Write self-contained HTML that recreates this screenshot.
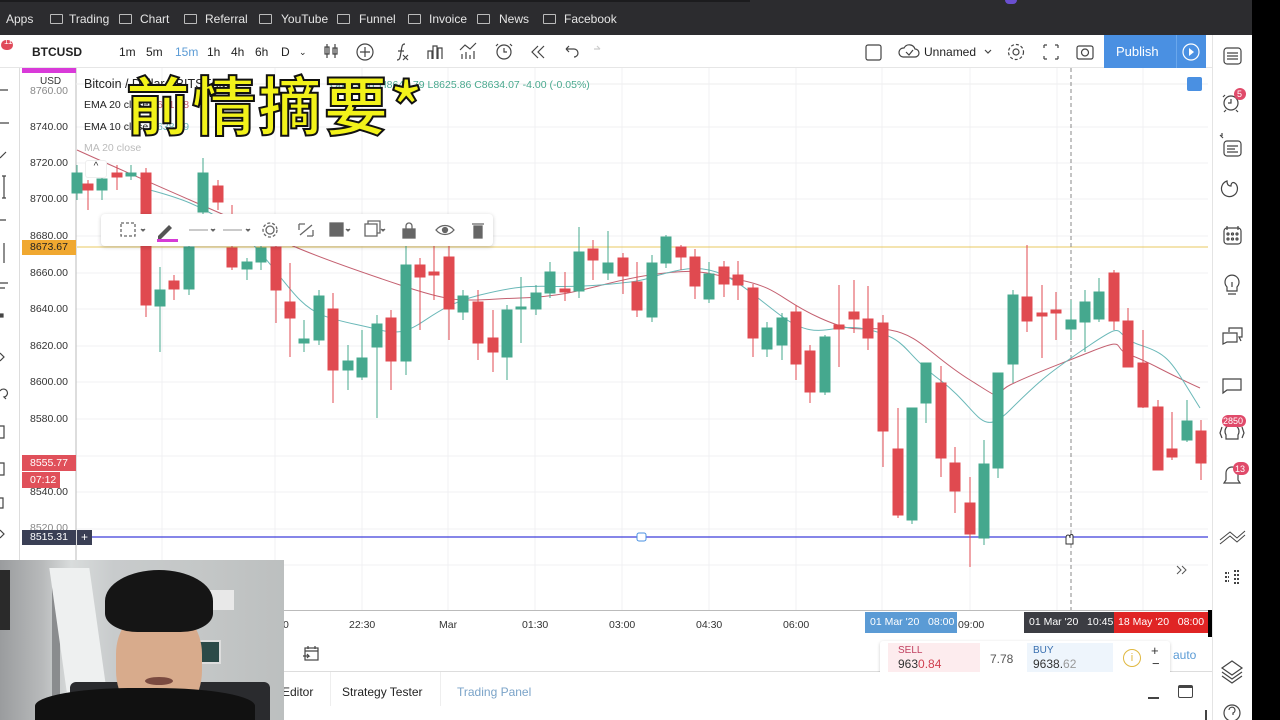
<!DOCTYPE html>
<html><head><meta charset="utf-8">
<style>
*{margin:0;padding:0;box-sizing:border-box}
body{width:1280px;height:720px;overflow:hidden;background:#000;font-family:"Liberation Sans",sans-serif;position:relative}
.abs{position:absolute;white-space:nowrap}
#bm{left:0;top:0;width:1252px;height:35px;background:#2c2c2f;color:#e6e6e6;font-size:12px}
#bm span{position:absolute;top:12px}
.fold{display:inline-block;width:13px;height:10px;border:1.3px solid #bbb;border-radius:1px;position:absolute;top:14px}
#hdr{left:0;top:35px;width:1212px;height:33px;background:#fff;border-bottom:1px solid #e6e6e6;font-size:12px;color:#222}
#hdr span{position:absolute;top:10px}
#ltb{left:0;top:68px;width:20px;height:652px;background:#fff;border-right:1px solid #ddd}
#rtb{left:1212px;top:35px;width:40px;height:685px;background:#fff;border-left:1px solid #e4e4e4}
.pl{position:absolute;left:30px;font-size:10.5px;color:#333}
.tl{position:absolute;top:619px;font-size:10.5px;color:#333}
</style></head><body>
<div id="bm" class="abs">
<span style="left:6px">Apps</span>
<i class="fold" style="left:50px"></i><span style="left:69px">Trading</span>
<i class="fold" style="left:119px"></i><span style="left:140px">Chart</span>
<i class="fold" style="left:184px"></i><span style="left:205px">Referral</span>
<i class="fold" style="left:259px"></i><span style="left:281px">YouTube</span>
<i class="fold" style="left:337px"></i><span style="left:359px">Funnel</span>
<i class="fold" style="left:408px"></i><span style="left:429px">Invoice</span>
<i class="fold" style="left:477px"></i><span style="left:499px">News</span>
<i class="fold" style="left:543px"></i><span style="left:564px">Facebook</span>
</div>
<div class="abs" style="left:0;top:0;width:750px;height:2px;background:#1c1c1e"></div>
<div class="abs" style="left:1005px;top:0;width:12px;height:4px;border-radius:0 0 6px 6px;background:#6a4fd0"></div>

<div id="hdr" class="abs">
<span style="left:32px;font-weight:bold">BTCUSD</span>
<span style="left:119px">1m</span><span style="left:146px">5m</span><span style="left:175px;color:#5b9bd5">15m</span>
<span style="left:207px">1h</span><span style="left:231px">4h</span><span style="left:255px">6h</span><span style="left:281px">D</span>
<span style="left:299px;font-size:9px;top:12px">&#8964;</span>
<span style="left:924px">Unnamed</span>
<div class="abs" style="left:1104px;top:0;width:72px;height:33px;background:#4a90e2;color:#fff;font-size:13px;padding:9px 0 0 12px">Publish</div>
<div class="abs" style="left:1176px;top:0;width:30px;height:33px;background:#4a90e2;border-left:1px solid #6aa7ec"></div>
<svg class="abs" style="left:0;top:0" width="1212" height="33" fill="none" stroke="#444" stroke-width="1.2">
<rect x="1" y="5" width="12" height="10" rx="5" fill="#e04a5a" stroke="none"/>
<path d="M327 9v14M335 9v14" /><rect x="325" y="12" width="4" height="7"/><rect x="333" y="13" width="4" height="6"/>
<circle cx="365" cy="17" r="8"/><path d="M365 12v10M360 17h10"/>
<path d="M397 25c3 0 3-2 4-8s1-8 4-8M398 16h6M403 20l5 5M408 20l-5 5"/>
<path d="M428 24V16h4v8M433 24V11h4v13M438 24V13h4v11"/>
<path d="M462 24v-5M466 24v-7M470 24v-4M474 24v-8M460 15l5-5 5 4 6-6"/>
<circle cx="504" cy="17" r="7"/><path d="M504 13v4h3M498 9l-2 2M510 9l2 2"/>
<path d="M538 11l-6 6 6 6M544 11l-6 6 6 6"/>
<path d="M566 14h8a4 4 0 0 1 0 8M566 14l3-3M566 14l3 3"/>
<path d="M600 14h-6M600 14l-3-3" stroke="#ccc"/>
<rect x="866" y="10" width="15" height="15" rx="2"/>
<path d="M903 22h12a4 4 0 0 0 0-8 6 6 0 0 0-11-1 4 4 0 0 0-1 9zM906 17l3 3 4-5"/>
<path d="M985 15l3 3 3-3" />
<circle cx="1016" cy="17" r="3"/><circle cx="1016" cy="17" r="7.5" stroke-dasharray="3 2"/>
<path d="M1044 10h3M1044 10v3M1058 10h-3M1058 10v3M1044 24h3M1044 24v-3M1058 24h-3M1058 24v-3"/>
<rect x="1077" y="11" width="16" height="13" rx="2"/><circle cx="1085" cy="17.5" r="3.5"/>
<circle cx="1191" cy="17" r="8" stroke="#fff"/><path d="M1189 13l5 4-5 4z" fill="#fff" stroke="none"/>
</svg>
</div>
<div class="abs" style="top:37px;font-size:8px;color:#fff;left:4px">11</div>

<!-- chart -->
<svg class="abs" style="left:20px;top:68px" width="1192" height="542">
<rect width="1192" height="542" fill="#fff"/>
<g stroke="#f0f1f3" stroke-width="1">
<path d="M56 59H1188M56 95H1188M56 131H1188M56 168H1188M56 205H1188M56 241H1188M56 278H1188M56 314H1188M56 351H1188M56 388H1188M56 424H1188M56 461H1188M56 497H1188"/>
<path d="M142 0V542M255 0V542M342 0V542M428 0V542M515 0V542M602 0V542M689 0V542M776 0V542M862 0V542M950 0V542M1037 0V542M1123 0V542"/>
</g>
<path d="M56 0V542" stroke="#bbb"/>
<path d="M56 16H1188" stroke="#eee"/>
</svg>
<div class="abs" style="left:22px;top:68px;width:54px;height:5px;background:#d93ad9"></div>
<div class="pl" style="top:76px;left:40px;font-size:10px">USD</div>
<div class="pl" style="top:85px;color:#888">8760.00</div>
<div class="pl" style="top:121px">8740.00</div>
<div class="pl" style="top:157px">8720.00</div>
<div class="pl" style="top:193px">8700.00</div>
<div class="pl" style="top:230px">8680.00</div>
<div class="pl" style="top:267px">8660.00</div>
<div class="pl" style="top:303px">8640.00</div>
<div class="pl" style="top:340px">8620.00</div>
<div class="pl" style="top:376px">8600.00</div>
<div class="pl" style="top:413px">8580.00</div>
<div class="pl" style="top:486px">8540.00</div>
<div class="pl" style="top:522px;color:#888">8520.00</div>
<div class="abs" style="left:22px;top:240px;width:54px;height:15px;background:#f0a830;color:#222;font-size:10.5px;padding:1px 0 0 8px">8673.67</div>
<div class="abs" style="left:22px;top:455px;width:54px;height:16px;background:#e0505a;color:#fff;font-size:10.5px;padding:2px 0 0 8px">8555.77</div>
<div class="abs" style="left:22px;top:472px;width:38px;height:16px;background:#e0505a;color:#fff;font-size:10.5px;padding:2px 0 0 8px">07:12</div>
<div class="abs" style="left:22px;top:530px;width:54px;height:15px;background:#3a3f55;color:#fff;font-size:10.5px;padding:1px 0 0 8px">8515.31</div>
<div class="abs" style="left:77px;top:530px;width:15px;height:15px;background:#3a3f55;color:#fff;font-size:12px;text-align:center;line-height:14px">+</div>

<svg class="abs" style="left:0;top:0" width="1212" height="640">
<g stroke-width="1">
<path d="M77 247H1208" stroke="#e8c860"/>
<path d="M92 537H1208" stroke="#3d3ddb" stroke-width="1.3"/>
<path d="M1071 68V610" stroke="#888" stroke-dasharray="4 3"/>
<rect x="637" y="533" width="9" height="8" rx="2" fill="#fff" stroke="#4a90e2"/>
<path d="M77 150C110 165 140 178 190 200S260 230 280 240 340 265 400 285 460 300 520 298 600 282 650 275 700 272 740 280 780 300 820 318 860 325 890 330 930 355 970 380 990 395 1010 385 1050 368 1090 352 1110 348 1130 355 1160 370 1200 388" fill="none" stroke="#c46070"/>
<path d="M150 190C180 198 200 205 230 225S280 280 300 300 340 320 380 330 420 310 480 295 540 290 600 285 640 278 680 270 740 285 780 315 830 320 870 330 900 350 940 380 980 440 1010 410 1050 372 1090 345 1110 335 1140 345 1170 360 1200 408" fill="none" stroke="#6ab8b8"/>
</g>
<g stroke="#e04a50" fill="#e04a50" stroke-width="1">
<path d="M88 180V210M117 165V190M146 168V317M174 275V300M218 180V210M232 205V270M276 240V323M290 263V357M333 293V403M391 310V390M420 258V330M434 240V300M449 240V340M478 290V360M493 310V372M565 272V301M593 240V280M623 253V294M637 262V317M681 245V270M695 249V299M724 261V297M738 261V300M753 284V357M796 305V380M810 345V403M839 285V367M854 280V333M868 286V350M883 315V467M898 408V518M941 366V477M955 447V513M970 477V567M1027 245V332M1042 285V358M1056 292V340M1114 270V330M1128 308V367M1143 330V408M1158 400V470M1172 412V460M1201 420V480"/>
<rect x="83" y="184" width="10" height="6"/><rect x="112" y="173" width="10" height="4"/><rect x="141" y="173" width="10" height="132"/>
<rect x="169" y="281" width="10" height="8"/><rect x="213" y="186" width="10" height="16"/><rect x="227" y="248" width="10" height="19"/>
<rect x="271" y="247" width="10" height="43"/><rect x="285" y="302" width="10" height="16"/><rect x="328" y="309" width="10" height="61"/>
<rect x="386" y="318" width="10" height="43"/><rect x="415" y="265" width="10" height="12"/><rect x="429" y="272" width="10" height="3"/>
<rect x="444" y="257" width="10" height="52"/><rect x="473" y="302" width="10" height="41"/><rect x="488" y="338" width="10" height="14"/>
<rect x="560" y="289" width="10" height="3"/><rect x="588" y="249" width="10" height="11"/><rect x="618" y="258" width="10" height="18"/>
<rect x="632" y="282" width="10" height="28"/><rect x="676" y="247" width="10" height="10"/><rect x="690" y="257" width="10" height="29"/>
<rect x="719" y="267" width="10" height="17"/><rect x="733" y="275" width="10" height="10"/><rect x="748" y="288" width="10" height="50"/>
<rect x="791" y="312" width="10" height="52"/><rect x="805" y="351" width="10" height="41"/><rect x="834" y="325" width="10" height="4"/>
<rect x="849" y="312" width="10" height="7"/><rect x="863" y="319" width="10" height="19"/><rect x="878" y="323" width="10" height="108"/>
<rect x="893" y="449" width="10" height="66"/><rect x="936" y="383" width="10" height="75"/><rect x="950" y="463" width="10" height="28"/>
<rect x="965" y="503" width="10" height="31"/><rect x="1022" y="297" width="10" height="24"/><rect x="1037" y="313" width="10" height="3"/>
<rect x="1051" y="310" width="10" height="3"/><rect x="1109" y="273" width="10" height="48"/><rect x="1123" y="321" width="10" height="46"/>
<rect x="1138" y="363" width="10" height="44"/><rect x="1153" y="407" width="10" height="63"/><rect x="1167" y="449" width="10" height="8"/>
<rect x="1196" y="431" width="10" height="32"/>
</g>
<g stroke="#45a88e" fill="#45a88e" stroke-width="1">
<path d="M77 165V200M102 175V200M131 165V180M160 267V352M189 240V295M203 158V215M247 258V280M261 240V270M304 320V352M319 290V345M348 345V390M362 330V380M377 315V418M406 245V375M463 290V320M507 305V380M521 277V343M536 285V315M550 262V298M579 227V298M608 231V280M652 255V322M666 235V268M709 262V303M767 322V357M782 313V360M825 335V395M912 408V524M926 363V423M984 440V545M998 373V478M1013 290V383M1071 300V340M1085 290V352M1099 278V322M1187 400V442"/>
<rect x="72" y="173" width="10" height="20"/><rect x="97" y="179" width="10" height="11"/><rect x="126" y="173" width="10" height="3"/>
<rect x="155" y="290" width="10" height="16"/><rect x="184" y="247" width="10" height="42"/><rect x="198" y="173" width="10" height="39"/>
<rect x="242" y="262" width="10" height="7"/><rect x="256" y="248" width="10" height="14"/><rect x="299" y="339" width="10" height="4"/>
<rect x="314" y="296" width="10" height="44"/><rect x="343" y="361" width="10" height="9"/><rect x="357" y="358" width="10" height="19"/>
<rect x="372" y="324" width="10" height="23"/><rect x="401" y="265" width="10" height="96"/><rect x="458" y="296" width="10" height="16"/>
<rect x="502" y="310" width="10" height="47"/><rect x="516" y="307" width="10" height="2"/><rect x="531" y="293" width="10" height="16"/>
<rect x="545" y="272" width="10" height="21"/><rect x="574" y="252" width="10" height="39"/><rect x="603" y="263" width="10" height="10"/>
<rect x="647" y="263" width="10" height="54"/><rect x="661" y="237" width="10" height="26"/><rect x="704" y="274" width="10" height="25"/>
<rect x="762" y="328" width="10" height="21"/><rect x="777" y="318" width="10" height="27"/><rect x="820" y="337" width="10" height="55"/>
<rect x="907" y="408" width="10" height="112"/><rect x="921" y="363" width="10" height="40"/><rect x="979" y="464" width="10" height="74"/>
<rect x="993" y="373" width="10" height="95"/><rect x="1008" y="295" width="10" height="69"/><rect x="1066" y="320" width="10" height="9"/>
<rect x="1080" y="302" width="10" height="20"/><rect x="1094" y="292" width="10" height="27"/><rect x="1182" y="421" width="10" height="19"/>
</g>
<path d="M1066 538c0-4 4-4 4 0v-2c0-2 3-2 3 0v8h-7z" fill="#fff" stroke="#333"/>
<path d="M1177 566l4 4-4 4M1182 566l4 4-4 4" stroke="#555" fill="none"/>
<rect x="1187" y="77" width="15" height="14" rx="2" fill="#4a90e2"/>
</svg>

<div class="abs" style="left:84px;top:77px;font-size:12.5px;color:#222">Bitcoin / Dollar · BITSTAMP</div>
<div class="abs" style="left:330px;top:79px;font-size:10.5px;color:#4aa98f">O8629.31 H8649.79 L8625.86 C8634.07 -4.00 (-0.05%)</div>
<div class="abs" style="left:84px;top:99px;font-size:10.5px;color:#222">EMA 20 close <span style="color:#c46070">8641.98</span></div>
<div class="abs" style="left:84px;top:121px;font-size:10.5px;color:#222">EMA 10 close <span style="color:#6ab8b8">8638.89</span></div>
<div class="abs" style="left:84px;top:142px;font-size:10.5px;color:#bbb">MA 20 close</div>
<div class="abs" style="left:85px;top:160px;width:22px;height:18px;background:#fff;border:1px solid #eee;border-radius:3px;font-size:10px;text-align:center;color:#333">^</div>
<div class="abs" style="left:126px;top:61px;font-family:'Noto Sans CJK SC',sans-serif;font-size:64px;font-weight:bold;color:#f2f21a;-webkit-text-stroke:2px #111;line-height:84px;letter-spacing:2px">前情摘要*</div>

<div class="abs" style="left:101px;top:214px;width:392px;height:32px;background:#fff;border-radius:4px;box-shadow:0 1px 4px rgba(0,0,0,.2)"></div>
<svg class="abs" style="left:101px;top:214px" width="392" height="32" fill="none" stroke="#666" stroke-width="1.3">
<rect x="20" y="9" width="14" height="13" stroke-dasharray="3 2"/>
<path d="M40 15l2 2 2-2M110 15l2 2 2-2M145 15l2 2 2-2M245 15l2 2 2-2M280 15l2 2 2-2" fill="#666"/>
<path d="M57 22l11-11 3 3-11 11h-3z" fill="#555" stroke="none"/>
<rect x="56" y="25" width="21" height="3" fill="#d63bd6" stroke="none"/>
<path d="M88 16h19M122 16h19" stroke="#aaa"/>
<circle cx="169" cy="16" r="4"/><circle cx="169" cy="16" r="7" stroke-dasharray="3 2"/>
<path d="M198 10h6M198 10v6M212 22h-6M212 22v-6M199 21l12-10"/>
<rect x="229" y="9" width="13" height="13" fill="#666"/>
<rect x="264" y="10" width="12" height="12"/><path d="M267 10V7h12v12h-3"/>
<rect x="302" y="15" width="12" height="9" fill="#666"/><path d="M305 15v-3a3 3 0 0 1 6 0v3"/>
<path d="M335 16c5-6 13-6 18 0-5 6-13 6-18 0z"/><circle cx="344" cy="16" r="2.5" fill="#666"/>
<path d="M371 10h12M373 12h8v12h-8z" fill="#666"/>
</svg>

<div class="abs" style="left:76px;top:610px;width:1132px;height:27px;background:#fff;border-top:1px solid #bbb"></div>
<div class="tl" style="left:283px">0</div>
<div class="tl" style="left:349px">22:30</div>
<div class="tl" style="left:439px">Mar</div>
<div class="tl" style="left:522px">01:30</div>
<div class="tl" style="left:609px">03:00</div>
<div class="tl" style="left:696px">04:30</div>
<div class="tl" style="left:783px">06:00</div>
<div class="abs" style="left:865px;top:612px;width:92px;height:21px;background:#5b9bd5;color:#fff;font-size:10.5px;padding:4px 0 0 5px">01 Mar '20&nbsp;&nbsp;&nbsp;08:00</div>
<div class="tl" style="left:958px">09:00</div>
<div class="abs" style="left:1024px;top:612px;width:90px;height:21px;background:#3c3d43;color:#fff;font-size:10.5px;padding:4px 0 0 5px">01 Mar '20&nbsp;&nbsp;&nbsp;10:45</div>
<div class="abs" style="left:1114px;top:612px;width:94px;height:21px;background:#e02424;color:#fff;font-size:10.5px;padding:4px 0 0 4px">18 May '20&nbsp;&nbsp;&nbsp;08:00</div>

<div class="abs" style="left:20px;top:637px;width:1192px;height:35px;background:#fff;border-bottom:1px solid #ddd"></div>
<svg class="abs" style="left:300px;top:645px" width="24" height="20" fill="none" stroke="#444" stroke-width="1.2"><rect x="5" y="3" width="13" height="12"/><path d="M5 6h13M8 1v3M15 1v3M3 11h6l-2-2M9 11l-2 2"/></svg>
<div class="abs" style="left:880px;top:641px;width:290px;height:35px;background:#fff;box-shadow:0 1px 3px rgba(0,0,0,.2);border-radius:3px"></div>
<div class="abs" style="left:888px;top:643px;width:92px;height:31px;background:#fdecee"></div>
<div class="abs" style="left:898px;top:645px;font-size:10px;color:#c04060">SELL</div>
<div class="abs" style="left:898px;top:657px;font-size:12px;color:#333">963<span style="color:#d04050">0.84</span></div>
<div class="abs" style="left:990px;top:652px;font-size:12px;color:#555">7.78</div>
<div class="abs" style="left:1027px;top:643px;width:86px;height:31px;background:#eef5fc"></div>
<div class="abs" style="left:1033px;top:645px;font-size:10px;color:#3a70b0">BUY</div>
<div class="abs" style="left:1033px;top:657px;font-size:12px;color:#333">9638.<span style="color:#999">62</span></div>
<div class="abs" style="left:1123px;top:649px;width:18px;height:18px;border:1.3px solid #e0b840;border-radius:50%;color:#e0b840;font-size:11px;text-align:center;line-height:16px">i</div>
<div class="abs" style="left:1151px;top:643px;font-size:13px;color:#333">+</div>
<div class="abs" style="left:1152px;top:656px;font-size:13px;color:#333">−</div>
<div class="abs" style="left:1173px;top:648px;font-size:12px;color:#5b9bd5">auto</div>

<div class="abs" style="left:20px;top:672px;width:1192px;height:48px;background:#fff"></div>
<div class="abs" style="left:330px;top:672px;width:1px;height:34px;background:#eee"></div>
<div class="abs" style="left:440px;top:672px;width:1px;height:34px;background:#eee"></div>
<div class="abs" style="left:282px;top:685px;font-size:12px;color:#222">Editor</div>
<div class="abs" style="left:342px;top:685px;font-size:12px;color:#222">Strategy Tester</div>
<div class="abs" style="left:457px;top:685px;font-size:12px;color:#7aa3c8">Trading Panel</div>
<div class="abs" style="left:1148px;top:697px;width:11px;height:1.5px;background:#444"></div>
<div class="abs" style="left:1178px;top:685px;width:15px;height:13px;border:1.3px solid #444;border-top-width:3px;border-radius:2px"></div>
<div class="abs" style="left:1205px;top:710px;width:2px;height:10px;background:#444"></div>

<div id="ltb" class="abs"></div>
<svg class="abs" style="left:0;top:68px" width="20" height="560" fill="none" stroke="#444" stroke-width="1.2">
<path d="M0 22h8M0 55h9M0 90l6-6M4 108v22M2 108h4M2 130h4M0 152l6 0M4 175v20M0 215h8M0 220h5M0 247h3M0 285l4 4-4 4M0 323a4 4 0 1 1 4 6l2 2M0 358h4v12H0M0 395h4v12H0M0 430h3v10H0M0 462l4 4-4 4"/>
<rect x="0" y="246" width="3" height="3" fill="#444"/>
</svg>

<div id="rtb" class="abs"></div>
<svg class="abs" style="left:1212px;top:35px" width="40" height="685" fill="none" stroke="#444" stroke-width="1.2">
<rect x="12" y="13" width="17" height="16" rx="3"/><path d="M15 18h11M15 21h11M15 24h11"/>
<circle cx="19" cy="68" r="7"/><path d="M19 64v4h-3M13 60l-2 2M25 60l2 2M14 75l-2 2M24 75l2 2"/>
<circle cx="28" cy="59" r="6" fill="#e04a6a" stroke="none"/>
<rect x="12" y="106" width="17" height="15" rx="3"/><path d="M15 111h11M15 114h8M15 117h11M8 100l3 3M10 98v3"/>
<path d="M24 149a8 8 0 1 1-9-3c0 4 2 5 4 5 0-3 2-5 5-2z"/>
<rect x="12" y="193" width="17" height="16" rx="3"/><path d="M15 191v4M26 191v4"/><circle cx="16" cy="199" r="1"/><circle cx="20.5" cy="199" r="1"/><circle cx="25" cy="199" r="1"/><circle cx="16" cy="204" r="1"/><circle cx="20.5" cy="204" r="1"/><circle cx="25" cy="204" r="1"/>
<path d="M15 252a7 7 0 1 1 10 0v4h-10zM16 259h8M20 252v-5"/>
<path d="M11 309v-11h14v9h-10zM17 297v-4h13v9h-3l2 4"/>
<path d="M11 358v-14h18v11H15z"/>
<path d="M14 400a7 7 0 1 1 12 0v4h-12zM10 392l-2 6 2 5M30 392l2 6-2 5"/>
<rect x="10" y="380" width="24" height="12" rx="6" fill="#e04a6a" stroke="none"/>
<path d="M12 448h16l-2-3v-7a6 6 0 0 0-12 0v7z"/>
<rect x="21" y="427" width="16" height="13" rx="6.5" fill="#e04a6a" stroke="none"/>
<path d="M8 509l10-8 7 6 8-7M8 505l10-8 7 6 8-7" stroke-width="1"/>
<path d="M13 538h4M13 542h4M13 546h4M22 536h6M22 540h6M22 544h6M22 548h6" stroke-width="2" stroke-dasharray="2 1"/>
<path d="M10 633l10-7 10 7-10 7zM10 637l10 7 10-7M10 641l10 7 10-7"/>
<circle cx="20" cy="678" r="8"/><path d="M17 675a3 3 0 1 1 4 3v2"/>
</svg>
<div class="abs" style="left:1237px;top:89px;font-size:9px;color:#fff">5</div>
<div class="abs" style="left:1223px;top:416px;font-size:9px;color:#fff">2850</div>
<div class="abs" style="left:1235px;top:464px;font-size:9px;color:#fff">13</div>

<div class="abs" style="left:0;top:560px;width:284px;height:160px;background:linear-gradient(90deg,#9a9c9e 0,#b8babb 15%,#d9dcdc 25%,#c8cbcc 40%,#c4c7c7 70%,#bcbfbf 100%);overflow:hidden">
<div class="abs" style="left:0;top:10px;width:10px;height:60px;background:#2a2a2a"></div>
<div class="abs" style="left:52px;top:10px;width:8px;height:140px;background:#8a8c8e"></div>
<div class="abs" style="left:60px;top:8px;width:40px;height:152px;background:#eef0f0;transform:skewX(8deg)"></div>
<div class="abs" style="left:207px;top:30px;width:27px;height:20px;background:#e8e8e8"></div>
<div class="abs" style="left:197px;top:80px;width:24px;height:24px;background:#2c4a48;border:2px solid #ddd"></div>
<div class="abs" style="left:70px;top:122px;width:200px;height:40px;background:#2a2b2e;border-radius:6px 6px 0 0"></div>
<div class="abs" style="left:116px;top:50px;width:86px;height:110px;background:#d8ab8c;border-radius:40% 40% 45% 45%"></div>
<div class="abs" style="left:105px;top:10px;width:108px;height:62px;background:#151515;border-radius:50% 50% 30% 30%"></div>
<div class="abs" style="left:35px;top:128px;width:220px;height:40px;background:#111;border-radius:45% 45% 0 0"></div>
<div class="abs" style="left:145px;top:117px;width:28px;height:8px;background:#7a4a40;border-radius:50%"></div>
</div>
</body></html>
